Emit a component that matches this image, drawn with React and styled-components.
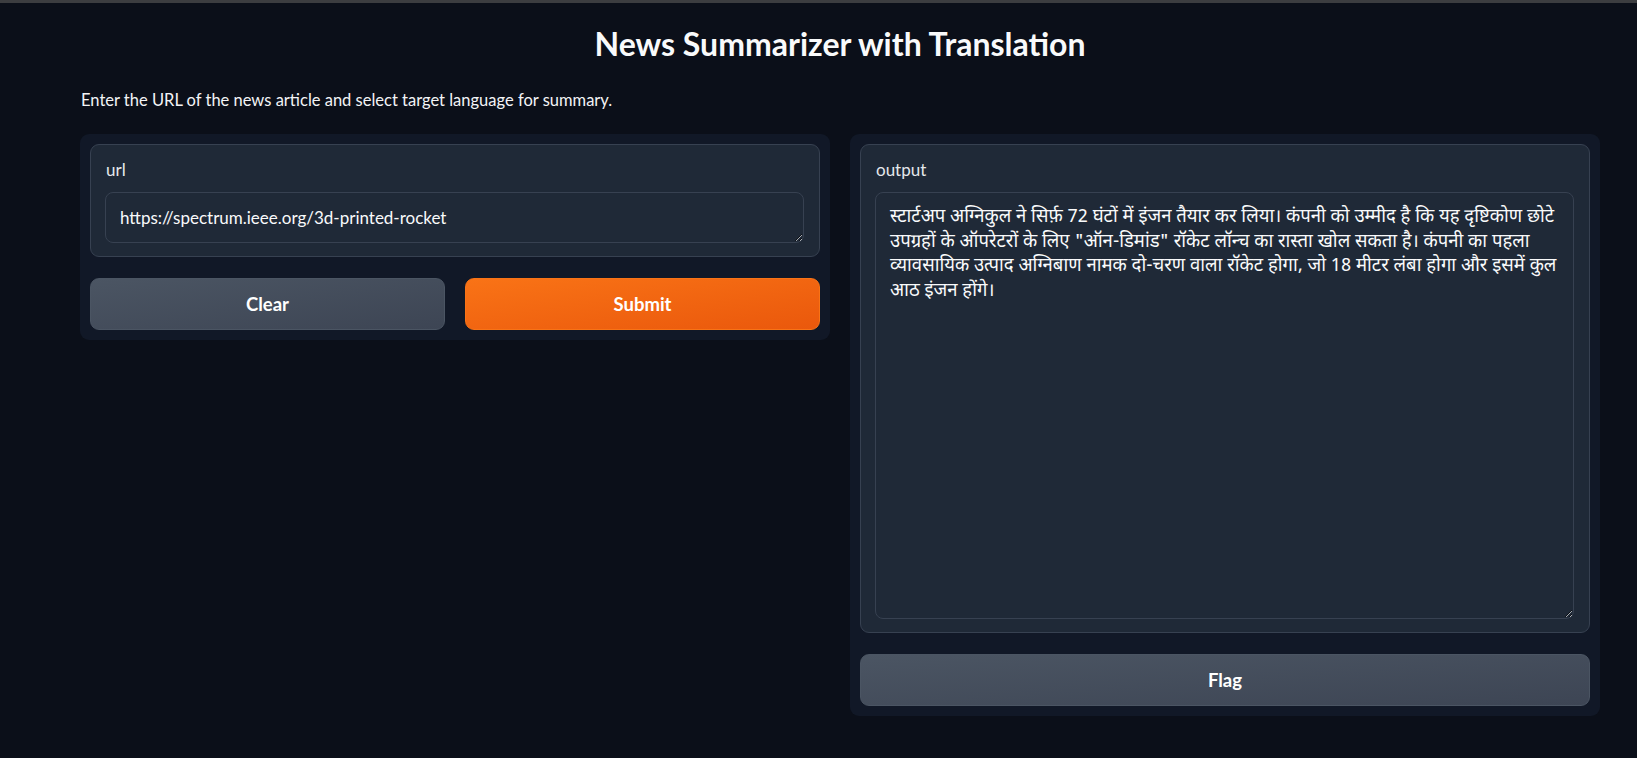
import {useState} from 'react';
import styled, {createGlobalStyle} from 'styled-components';

// Lines broken where the summary wraps in the output box.
const summary = [
    'स्टार्टअप अग्निकुल ने सिर्फ़ 72 घंटों में इंजन तैयार कर लिया। कंपनी को उम्मीद है कि यह दृष्टिकोण छोटे',
    'उपग्रहों के ऑपरेटरों के लिए "ऑन-डिमांड" रॉकेट लॉन्च का रास्ता खोल सकता है। कंपनी का पहला',
    'व्यावसायिक उत्पाद अग्निबाण नामक दो-चरण वाला रॉकेट होगा, जो 18 मीटर लंबा होगा और इसमें कुल',
    'आठ इंजन होंगे।'
].join('\n');

export default function App() {
    const [url, setUrl] = useState('https://spectrum.ieee.org/3d-printed-rocket');

    return (
        <>
            <GlobalStyle/>
            <TopStrip/>
            <Page>
                <Title>News Summarizer with Translation</Title>
                <Description>Enter the URL of the news article and select target language for summary.</Description>
                <Columns>
                    <Panel>
                        <Block>
                            <Label>url</Label>
                            <TextArea rows={1} height={51} value={url} onChange={e => setUrl(e.target.value)}/>
                        </Block>
                        <ButtonRow>
                            <Button onClick={() => setUrl('')}>Clear</Button>
                            <Button variant='primary'>Submit</Button>
                        </ButtonRow>
                    </Panel>
                    <Panel>
                        <Block>
                            <Label>output</Label>
                            <TextArea hindi height={427} readOnly defaultValue={summary}/>
                        </Block>
                        <Button>Flag</Button>
                    </Panel>
                </Columns>
            </Page>
        </>
    );
}

const GlobalStyle = createGlobalStyle`
    html, body {
        margin: 0;
        background: #0b0f19;
        color: #f3f4f6;
        font-family: Lato, "Open Sans", sans-serif;
        color-scheme: dark;
    }
`;

const TopStrip = styled.div`
    height: 3px;
    background: #3c3d40;
`;

const Page = styled.main`
    padding: 0 37px 40px 80px;
`;

const Title = styled.h1`
    margin: 0;
    padding-top: 21px;
    text-align: center;
    font-size: 32px;
    line-height: 40px;
    font-weight: 700;
    color: #f9fafb;
`;

const Description = styled.p`
    margin: 24px 0 0 1px;
    font-size: 16.5px;
    line-height: 24px;
    color: #f3f4f6;
`;

const Columns = styled.div`
    display: grid;
    grid-template-columns: 1fr 1fr;
    gap: 20px;
    align-items: start;
    margin-top: 22px;
`;

const Panel = styled.section`
    display: flex;
    flex-direction: column;
    gap: 21px;
    padding: 10px;
    background: #111827;
    border-radius: 9px;
`;

const Block = styled.div`
    display: flex;
    flex-direction: column;
    padding: 14px 15px 13px 14px;
    background: #1f2937;
    border: 1px solid #374151;
    border-radius: 9px;
`;

const Label = styled.span`
    font-size: 17px;
    line-height: 22px;
    color: #e5e7eb;
    margin: 0 0 11px 1px;
`;

const TextArea = styled.textarea`
    box-sizing: border-box;
    height: ${p => p.height}px;
    padding: ${p => p.hindi ? '13px 6px 11px 14px' : '12px 14px'};
    background: #1f2937;
    border: 1px solid #374151;
    border-radius: 8px;
    color: #f9fafb;
    font-family: ${p => p.hindi ? '"Noto Sans Devanagari", "Lohit Devanagari", "Nirmala UI", "Noto Sans", sans-serif' : 'Lato, "Open Sans", sans-serif'};
    font-size: ${p => p.hindi ? '18.5px' : '17px'};
    line-height: ${p => p.hindi ? '24.7px' : '25px'};
    white-space: pre-wrap;
    resize: vertical;
    outline: none;
`;

const ButtonRow = styled.div`
    display: grid;
    grid-template-columns: 1fr 1fr;
    gap: 20px;
`;

const Button = styled.button`
    height: 52px;
    border-radius: 9px;
    border: 1px solid ${p => p.variant === 'primary' ? '#f97316' : '#4b5563'};
    background: ${p => p.variant === 'primary'
        ? 'linear-gradient(to bottom right, #f97316, #ea580c)'
        : 'linear-gradient(to bottom right, #4b5563, #3d4554)'};
    color: #ffffff;
    font-family: Lato, "Open Sans", sans-serif;
    font-size: 18.5px;
    font-weight: 700;
    cursor: pointer;
`;
